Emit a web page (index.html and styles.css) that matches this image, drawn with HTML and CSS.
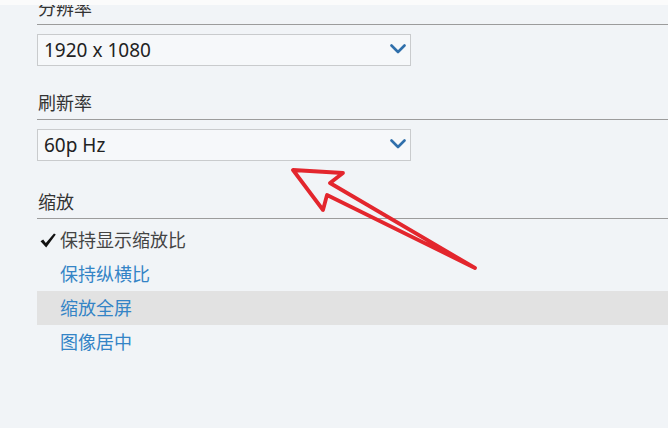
FILE: index.html
```html
<!DOCTYPE html>
<html lang="zh-CN">
<head>
    <meta charset="utf-8">
    <title>显示设置</title>
    <link rel="stylesheet" href="styles.css">
</head>
<body>
    <div class="topbar"></div>
    <main class="panel">
        <div class="label first">分辨率</div>
        <div class="select">
            <span>1920 x 1080</span>
            <svg class="chev" width="16" height="10" viewBox="0 0 16 10"><path d="M1.5 1.5 L8 8 L14.5 1.5" fill="none" stroke="#2f6fab" stroke-width="2.6" stroke-linecap="round" stroke-linejoin="round"/></svg>
        </div>

        <div class="label">刷新率</div>
        <div class="select">
            <span>60p Hz</span>
            <svg class="chev" width="16" height="10" viewBox="0 0 16 10"><path d="M1.5 1.5 L8 8 L14.5 1.5" fill="none" stroke="#2f6fab" stroke-width="2.6" stroke-linecap="round" stroke-linejoin="round"/></svg>
        </div>

        <div class="label zoom">缩放</div>
        <ul class="opts">
            <li class="checked"><svg class="tick" width="16" height="15" viewBox="0 0 16 15"><path d="M0.5 8.2 L3.2 6.4 L5.8 10 L14 0.5 L15.8 1.6 L6.2 14.5 Z" fill="#111"/></svg>保持显示缩放比</li>
            <li class="link">保持纵横比</li>
            <li class="link hover">缩放全屏</li>
            <li class="link">图像居中</li>
        </ul>
    </main>

    <!-- annotation arrow drawn over the screenshot -->
    <svg class="arrow" width="668" height="428" viewBox="0 0 668 428">
        <polygon points="293,170 343,173 330,183 475,268 327,195 323,210" fill="none" stroke="#e3262d" stroke-width="3.8" stroke-linejoin="round"/>
    </svg>
</body>
</html>
```

FILE: styles.css
```css
html, body {
    margin: 0;
    height: 100%;
}

body {
    background: #f1f4f7;
    font-family: "Noto Sans", "Noto Sans CJK SC", sans-serif;
    color: #333;
    position: relative;
    overflow: hidden;
}

.topbar {
    height: 5px;
    background: #fbfbfb;
    position: relative;
    z-index: 1;
}

.panel {
    padding-left: 37px;
}

.label {
    font-size: 18px;
    line-height: 22px;
    padding: 0 0 5px 1px;
    border-bottom: 1px solid #9c9c9c;
    margin-top: 26px;
    color: #333;
}
.label.first {
    margin-top: -8px;
}
.label.zoom {
    margin-top: 30px;
}

.select {
    width: 374px;
    height: 32px;
    box-sizing: border-box;
    margin-top: 9px;
    border: 1px solid #c9cbcd;
    background: #f6f8fa;
    display: flex;
    align-items: center;
    justify-content: space-between;
    padding: 0 4px 0 6px;
    font-size: 19px;
    color: #222;
}

.chev {
    margin-top: -2px;
}

.opts {
    list-style: none;
    margin: 4px 0 0 0;
    padding: 0;
}

.opts li {
    height: 34px;
    line-height: 34px;
    font-size: 18px;
    padding-left: 23px;
    display: flex;
    align-items: center;
}

.opts li.checked {
    padding-left: 3px;
    color: #444;
}

.tick {
    margin-right: 4px;
}

.opts li.link {
    color: #3484c6;
}

.opts li.hover {
    background: #e2e2e2;
}

.arrow {
    position: absolute;
    left: 0;
    top: 0;
}
```
